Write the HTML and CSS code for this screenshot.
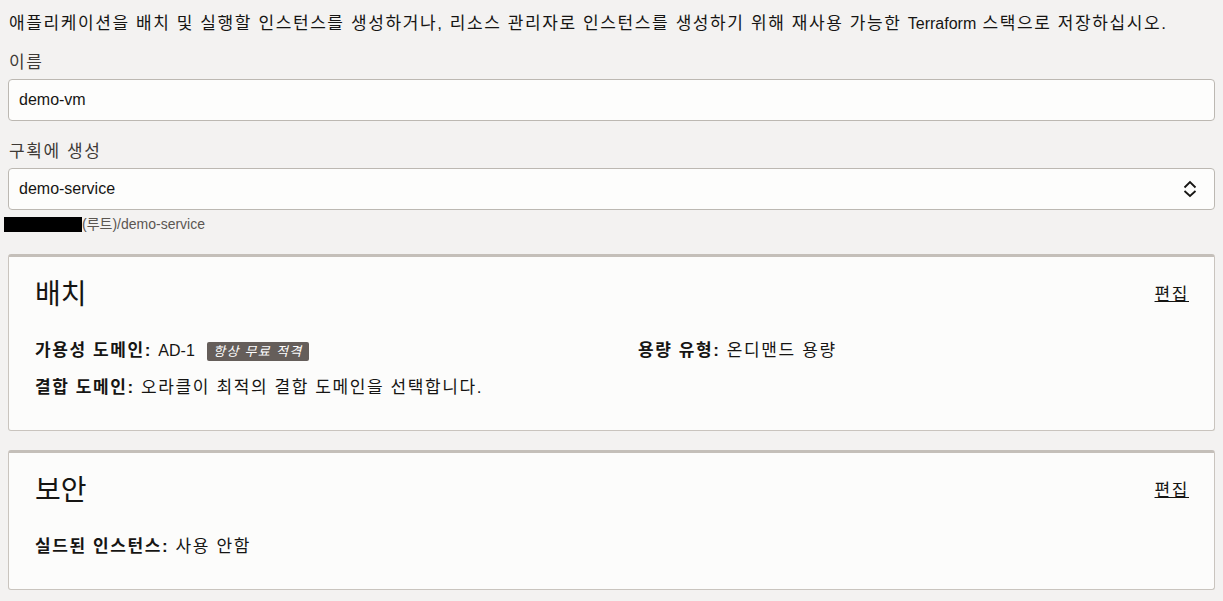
FILE: index.html
```html
<!DOCTYPE html>
<html lang="ko">

<head>
    <meta charset="UTF-8">
    <meta name="viewport" content="width=device-width, initial-scale=1.0">
    <title>인스턴스 생성</title>
    <link rel="stylesheet" href="styles.css">
</head>

<body>
    <main class="page">
        <p class="intro">애플리케이션을 배치 및 실행할 인스턴스를 생성하거나, 리소스 관리자로 인스턴스를 생성하기 위해 재사용 가능한 <span class="en">Terraform</span> 스택으로 저장하십시오.</p>

        <div class="field">
            <label for="name">이름</label>
            <input type="text" id="name" class="text-input" value="demo-vm">
        </div>

        <div class="field">
            <label for="compartment">구획에 생성</label>
            <div class="select-box">
                <span id="compartment">demo-service</span>
                <svg class="chevrons" width="14" height="18" viewBox="0 0 14 18">
                    <path d="M1.5 7.5 L7 2 L12.5 7.5" fill="none" stroke="#161513" stroke-width="1.8"/>
                    <path d="M1.5 11 L7 16 L12.5 11" fill="none" stroke="#161513" stroke-width="1.8"/>
                </svg>
            </div>
            <div class="crumb"><span class="redacted"></span>(루트)/demo-service</div>
        </div>

        <section class="card">
            <div class="card-head">
                <h2>배치</h2>
                <a href="#" class="edit">편집</a>
            </div>
            <div class="rows">
                <div class="row cols">
                    <div><b>가용성 도메인:</b> <span class="en">AD-1</span> <span class="badge">항상 무료 적격</span></div>
                    <div><b>용량 유형:</b> 온디맨드 용량</div>
                </div>
                <div class="row"><b>결합 도메인:</b> 오라클이 최적의 결합 도메인을 선택합니다.</div>
            </div>
        </section>

        <section class="card">
            <div class="card-head">
                <h2>보안</h2>
                <a href="#" class="edit">편집</a>
            </div>
            <div class="rows">
                <div class="row"><b>실드된 인스턴스:</b> 사용 안함</div>
            </div>
        </section>
    </main>
</body>

</html>
```

FILE: styles.css
```css
body {
    font-family: 'Liberation Sans', 'Noto Sans CJK KR', sans-serif;
    margin: 0;
    padding: 0;
    background-color: #f3f2f1;
    color: #161513;
    font-size: 17px;
    letter-spacing: 1.6px;
}

/* latin words inside korean text */
.en {
    font-size: 16px;
    letter-spacing: 0;
}

.page {
    padding: 14px 8px 0 8px;
}

.intro {
    margin: 0 0 0 1px;
    line-height: 20px;
}

.field {
    margin-top: 19px;
}

.field + .field {
    margin-top: 21px;
}

.field label {
    display: block;
    line-height: 20px;
    color: #3e3a36;
    margin-left: 1px;
    margin-bottom: 6px;
}

.text-input,
.select-box {
    box-sizing: border-box;
    width: 100%;
    height: 42px;
    padding: 0 10px;
    font-family: inherit;
    font-size: 16px;
    letter-spacing: 0;
    color: #161513;
    background-color: #fdfdfc;
    border: 1px solid #bcb8b2;
    border-radius: 4px;
    outline: none;
}

.select-box {
    display: flex;
    align-items: center;
    justify-content: space-between;
    padding-right: 17px;
}

.chevrons {
    display: block;
}

.crumb {
    margin: 6px 0 0 -4px;
    display: flex;
    align-items: center;
    font-size: 14px;
    letter-spacing: 0;
    line-height: 17px;
    color: #5b5651;
}

.redacted {
    display: inline-block;
    width: 78px;
    height: 15px;
    background-color: #000;
}

.card {
    margin-top: 21px;
    background-color: #fcfcfb;
    border: 1px solid #c9c4be;
    border-top: 3px solid #c4bfb9;
    border-radius: 3px;
    padding: 19px 26px 30px 26px;
}

.card + .card {
    margin-top: 19px;
}

.card-head {
    display: flex;
    justify-content: space-between;
    align-items: center;
    height: 38px;
}

.card-head h2 {
    margin: 0;
    font-size: 28px;
    font-weight: normal;
    letter-spacing: 0;
    line-height: 38px;
}

.edit {
    color: #161513;
    text-decoration: underline;
    margin-right: -1px;
    margin-bottom: 6px;
}

.rows {
    margin-top: 25px;
    display: flex;
    flex-direction: column;
    gap: 13px;
}

.row {
    line-height: 24px;
}

.row b {
    font-weight: bold;
}

.cols {
    display: grid;
    grid-template-columns: 603px 1fr;
}

.badge {
    display: inline-block;
    margin-left: 6px;
    padding: 0 6px;
    height: 19px;
    line-height: 19px;
    font-size: 13px;
    letter-spacing: 1.3px;
    font-style: italic;
    color: #fff;
    background-color: #655e5a;
    border-radius: 2px;
    vertical-align: 0;
}
```
